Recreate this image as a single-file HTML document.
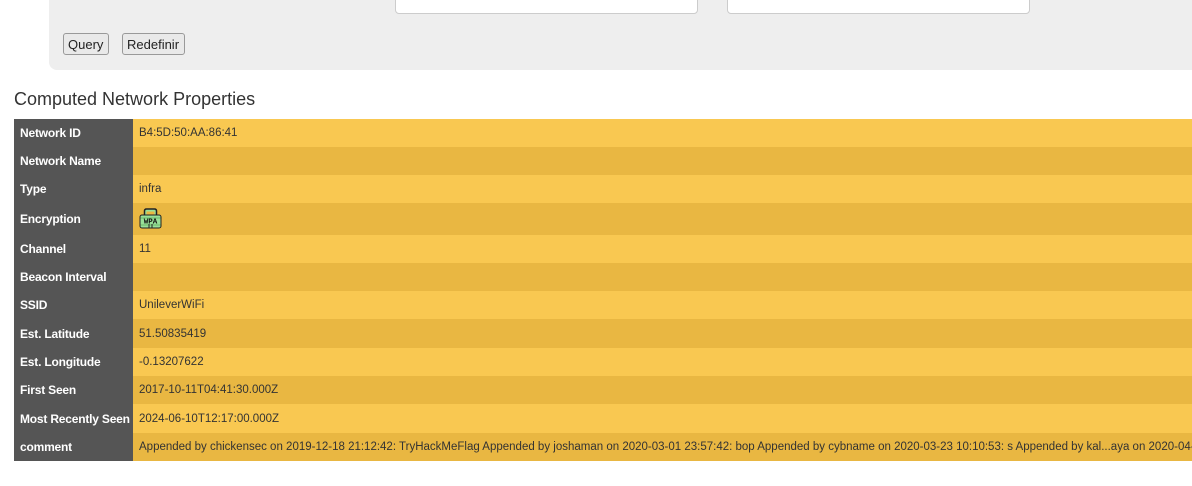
<!DOCTYPE html>
<html><head><style>
body{margin:0;width:1192px;height:486px;overflow:hidden;background:#fff;font-family:"Liberation Sans",sans-serif;position:relative}
.panel{position:absolute;left:49px;top:-10px;width:1160px;height:80px;background:#eeeeee;border-radius:0 0 0 8px}
.inp{position:absolute;top:-10px;height:22px;background:#fff;border:1px solid #ccc;border-radius:4px}
.btn{position:absolute;top:33px;height:22px;background:#e9e9e9;border:1px solid #999;border-radius:3px;font-size:13px;color:#222;line-height:22px;padding:0 4px;box-sizing:border-box}
h2{position:absolute;left:14px;top:89px;margin:0;font-size:18px;font-weight:normal;color:#333}
table{position:absolute;left:14px;top:119px;border-collapse:collapse;width:1220px;table-layout:fixed}
td{padding:0 6px;height:28px;white-space:nowrap;overflow:hidden;font-size:11.5px;color:#333;box-sizing:border-box}
td.l{background:#555;color:#fff;font-weight:bold;font-size:12px;width:119px;padding-right:0;letter-spacing:-0.2px}
tr:nth-child(odd) td.v{background:#f9c851}
tr:nth-child(even) td.v{background:#e9b742}
</style></head><body>
<div class="panel"></div>
<div class="inp" style="left:395px;width:301px"></div>
<div class="inp" style="left:727px;width:301px"></div>
<div class="btn" style="left:63px;width:46px">Query</div>
<div class="btn" style="left:122px;width:63px">Redefinir</div>
<h2>Computed Network Properties</h2>
<table>
<colgroup><col style="width:119px"><col></colgroup>
<tr><td class="l">Network ID</td><td class="v">B4:5D:50:AA:86:41</td></tr>
<tr><td class="l">Network Name</td><td class="v"></td></tr>
<tr><td class="l">Type</td><td class="v">infra</td></tr>
<tr><td class="l" style="height:32px">Encryption</td><td class="v"><svg width="23" height="22" viewBox="0 0 23 22" style="display:block;margin-top:-3px"><path d="M5.5 9V4Q5.5 2 7.5 2H15.5Q17.5 2 17.5 4V9" fill="#98e098" stroke="#222" stroke-width="1.5"/><rect x="7.5" y="4.5" width="8" height="4" fill="#e9b742"/><rect x="1" y="8" width="21" height="13" rx="2" fill="#98e098" stroke="#222"/><line x1="1.5" y1="11" x2="21.5" y2="11" stroke="#6cb86c"/><line x1="1.5" y1="18" x2="21.5" y2="18" stroke="#6cb86c"/><text x="11.5" y="16.5" font-size="7.5" font-weight="bold" font-family="Liberation Mono,monospace" text-anchor="middle" fill="#111">WPA</text><line x1="10" y1="17" x2="10" y2="21" stroke="#222"/><line x1="13" y1="17" x2="13" y2="21" stroke="#222"/></svg></td></tr>
<tr><td class="l">Channel</td><td class="v">11</td></tr>
<tr><td class="l">Beacon Interval</td><td class="v"></td></tr>
<tr><td class="l">SSID</td><td class="v">UnileverWiFi</td></tr>
<tr><td class="l" style="height:29px">Est. Latitude</td><td class="v">51.50835419</td></tr>
<tr><td class="l">Est. Longitude</td><td class="v">-0.13207622</td></tr>
<tr><td class="l">First Seen</td><td class="v">2017-10-11T04:41:30.000Z</td></tr>
<tr><td class="l" style="height:29px">Most Recently Seen</td><td class="v">2024-06-10T12:17:00.000Z</td></tr>
<tr><td class="l">comment</td><td class="v">Appended by chickensec on 2019-12-18 21:12:42: TryHackMeFlag Appended by joshaman on 2020-03-01 23:57:42: bop Appended by cybname on 2020-03-23 10:10:53: s Appended by kal...aya on 2020-04-20</td></tr>
</table>
</body></html>
